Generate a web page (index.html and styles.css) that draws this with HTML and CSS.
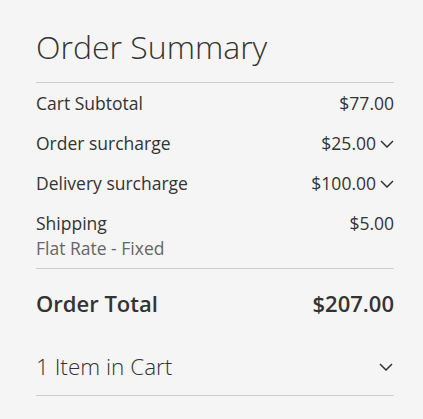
FILE: index.html
```html
<!DOCTYPE html>
<html>
<head>
<meta charset="utf-8">
<link rel="stylesheet" href="styles.css">
</head>
<body>
<div class="summary">
  <h2 class="title">Order Summary</h2>
  <div class="totals">
    <div class="row"><span>Cart Subtotal</span><span class="amt">$77.00</span></div>
    <div class="row"><span>Order surcharge</span><span class="amt">$25.00<svg class="chev" viewBox="0 0 14 8"><path d="M1 1 L7 7 L13 1" fill="none" stroke="#333" stroke-width="1.5"/></svg></span></div>
    <div class="row"><span>Delivery surcharge</span><span class="amt">$100.00<svg class="chev" viewBox="0 0 14 8"><path d="M1 1 L7 7 L13 1" fill="none" stroke="#333" stroke-width="1.5"/></svg></span></div>
    <div class="row ship"><div><div>Shipping</div><div class="method">Flat Rate - Fixed</div></div><span class="amt">$5.00</span></div>
  </div>
  <div class="grand"><span>Order Total</span><span>$207.00</span></div>
  <div class="items"><span>1 Item in Cart</span><svg class="chev2" viewBox="0 0 14 8"><path d="M1 1 L7 7 L13 1" fill="none" stroke="#333" stroke-width="1.5"/></svg></div>
</div>
</body>
</html>
```
FILE: styles.css
```css
html, body { margin: 0; padding: 0; background: #f5f5f5; }
body { font-family: "Open Sans", sans-serif; color: #333; }
.summary { padding: 27px 29px 0 36px; }
.title { margin: 0; font-size: 32px; font-weight: 300; line-height: 40px; padding-bottom: 15px; border-bottom: 1px solid #ccc; color: #333; }
.totals { padding-top: 8px; }
.row { display: flex; justify-content: space-between; align-items: flex-start; font-size: 17.5px; line-height: 24px; padding: 0 0 16px; }
.row.ship { padding-bottom: 7px; border-bottom: 1px solid #ccc; }
.amt { display: flex; align-items: center; }
.chev { width: 14px; height: 8px; margin-left: 4px; margin-top: 2px; }
.method { color: #666; line-height: 26px; }
.grand { display: flex; justify-content: space-between; font-size: 22px; font-weight: 600; line-height: 28px; padding: 20px 0 0; }
.items { display: flex; justify-content: space-between; align-items: center; font-size: 22.5px; font-weight: 300; line-height: 30px; padding: 35px 0 13px; border-bottom: 1px solid #ccc; }
.chev2 { width: 14px; height: 8px; margin-right: 1px; }
```
